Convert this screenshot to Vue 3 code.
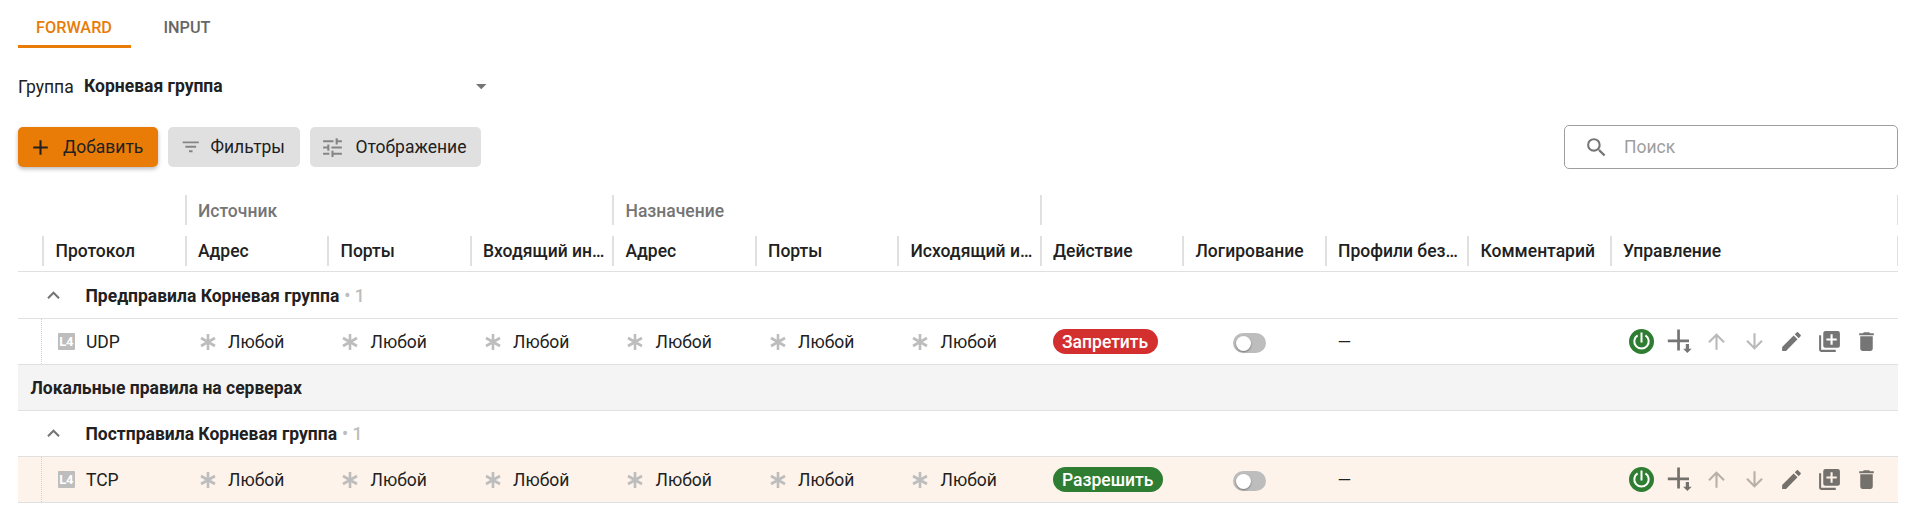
<script setup>
const columns = ['Протокол', 'Адрес', 'Порты', 'Входящий ин…', 'Адрес', 'Порты', 'Исходящий и…', 'Действие', 'Логирование', 'Профили без…', 'Комментарий', 'Управление']
const sections = [
  { id: 'pre', title: 'Предправила Корневая группа', protocol: 'UDP', action: 'Запретить', kind: 'deny' },
  { id: 'local', title: 'Локальные правила на серверах', banner: true },
  { id: 'post', title: 'Постправила Корневая группа', protocol: 'TCP', action: 'Разрешить', kind: 'allow', tinted: true },
]
const actions = [
  { name: 'up', faded: true, d: 'M13 20h-2V8l-5.500 5.500-1.420-1.420L12 4.160l7.920 7.920-1.420 1.420L13 8v12z' },
  { name: 'down', faded: true, d: 'M11 4h2v12l5.500-5.500 1.420 1.420L12 19.840l-7.920-7.920L5.500 10.500 11 16V4z' },
  { name: 'edit', d: 'M20.710 7.040c.39-.39.39-1.040 0-1.410l-2.340-2.340c-.37-.39-1.020-.39-1.410 0l-1.840 1.830 3.750 3.750M3 17.250V21h3.750L17.810 9.930l-3.750-3.750L3 17.250z' },
  { name: 'copy', d: 'M4 6H2v14a2 2 0 0 0 2 2h14v-2H4V6zm16-4H8a2 2 0 0 0-2 2v12a2 2 0 0 0 2 2h12a2 2 0 0 0 2-2V4a2 2 0 0 0-2-2zm-1 9h-4v4h-2v-4H9V9h4V5h2v4h4v2z' },
  { name: 'delete', d: 'M19 4h-3.500l-1-1h-5l-1 1H5v2h14M6 19a2 2 0 0 0 2 2h8a2 2 0 0 0 2-2V7H6v12z' },
]
</script>

<template>
  <main class="page">
    <nav class="tabs">
      <a class="tab active">FORWARD</a>
      <a class="tab">INPUT</a>
    </nav>

    <div class="group">
      <span class="group-label">Группа</span>
      <div class="select">
        <span class="select-value">Корневая группа</span>
        <svg class="caret" viewBox="0 0 10 5"><path d="M0 0h10L5 5z" /></svg>
      </div>
    </div>

    <div class="toolbar">
      <button class="btn primary">
        <svg class="btn-icon" viewBox="0 0 24 24"><path d="M19 13h-6v6h-2v-6H5v-2h6V5h2v6h6v2z" /></svg>
        <span>Добавить</span>
      </button>
      <button class="btn filters">
        <svg class="btn-icon" viewBox="0 0 24 24"><path d="M6 13h12v-2H6M3 6v2h18V6M10 18h4v-2h-4v2z" /></svg>
        <span>Фильтры</span>
      </button>
      <button class="btn display">
        <svg class="btn-icon" viewBox="0 0 24 24"><path d="M3 17v2h6v-2H3M3 5v2h10V5H3m10 16v-2h8v-2h-8v-2h-2v6h2M7 9v2H3v2h4v2h2V9H7m14 4v-2H11v2h10m-6-4h2V7h4V5h-4V3h-2v6z" /></svg>
        <span>Отображение</span>
      </button>
      <div class="search">
        <svg class="search-icon" viewBox="0 0 24 24"><path d="M9.500 3A6.500 6.500 0 0 1 16 9.500c0 1.610-.59 3.090-1.560 4.230l.27.27h.79l5 5-1.500 1.500-5-5v-.79l-.27-.27A6.516 6.516 0 0 1 9.500 16a6.500 6.500 0 0 1 0-13m0 2C7 5 5 7 5 9.500S7 14 9.500 14 14 12 14 9.500 12 5 9.500 5z" /></svg>
        <span>Поиск</span>
      </div>
    </div>

    <section class="table">
      <div class="grid band">
        <div class="band-lead"></div>
        <div class="band-cell">Источник</div>
        <div class="band-cell">Назначение</div>
        <div class="band-cell band-rest"></div>
      </div>
      <div class="grid head">
        <div></div>
        <div v-for="(c, i) in columns" :key="i" class="head-cell"><span>{{ c }}</span></div>
      </div>

      <template v-for="s in sections" :key="s.id">
        <div v-if="s.banner" class="banner">{{ s.title }}</div>
        <template v-else>
          <div class="section" :class="s.id">
            <svg class="chevron" viewBox="0 0 24 24"><path d="M7.410 15.410L12 10.830l4.590 4.580L18 14l-6-6-6 6z" /></svg>
            <span class="section-title">{{ s.title }}</span>
            <span class="section-count">• 1</span>
          </div>
          <div class="grid row" :class="{ tinted: s.tinted }">
            <div></div>
            <div class="cell protocol">
              <span class="layer">L4</span>
              <span class="text">{{ s.protocol }}</span>
            </div>
            <div v-for="n in 6" :key="n" class="cell any">
              <svg class="star" viewBox="0 0 16 16"><path d="M8 0v16M1 4l14 8M15 4L1 12" /></svg>
              <span class="text">Любой</span>
            </div>
            <div class="cell"><span class="chip" :class="s.kind">{{ s.action }}</span></div>
            <div class="cell logging"><span class="toggle"><i></i></span></div>
            <div class="cell"><span class="text">—</span></div>
            <div class="cell"></div>
            <div class="cell actions">
              <svg class="icon power" viewBox="0 0 25 25">
                <circle cx="12.500" cy="12.500" r="12.500" />
                <path d="M12.500 3.500v10M8.600 6.300a7.200 7.200 0 1 0 7.800 0" />
              </svg>
              <svg class="icon insert" viewBox="0 0 25 25">
                <path d="M.8 10.500h21.200v2.700H.8zM10.200 .6h2.700v21h-2.700zM18.800 15h3.200v4.700h2.700l-4.300 4.300-4.300-4.300h2.700z" />
              </svg>
              <svg v-for="a in actions" :key="a.name" class="icon" :class="{ faded: a.faded }" viewBox="0 0 24 24"><path :d="a.d" /></svg>
            </div>
          </div>
        </template>
      </template>
    </section>
  </main>
</template>

<style>
body { background: #fff; }
</style>

<style scoped>
* { box-sizing: border-box; }
.page {
  height: 521px;
  padding: 0 10px 0 18px;
  overflow: hidden;
  font-family: Roboto, "Noto Sans", sans-serif;
  font-size: 17.5px;
  line-height: 25px;
  color: #212121;
}
svg { display: block; flex: none; fill: currentColor; }

.tabs { display: flex; height: 48px; }
.tab {
  width: 113px;
  height: 48px;
  padding: 15px 1px 0 0;
  font-size: 16.25px;
  font-weight: 500;
  text-align: center;
  color: #666;
}
.tab.active { color: #e87c07; border-bottom: 3px solid #e87c07; }

.group { display: flex; height: 77px; padding-top: 26px; }
.group-label { width: 66px; padding-top: 1px; }
.select { display: flex; width: 402.500px; height: 25px; justify-content: space-between; font-weight: 700; }
.caret { width: 10.500px; height: 5.250px; margin-top: 10px; color: #757575; }

.toolbar { display: flex; align-items: center; height: 44px; gap: 10px; }
.btn {
  display: flex;
  align-items: center;
  height: 40px;
  padding: 0;
  border: 0;
  border-radius: 5px;
  background: #e0e0e0;
  color: #212121;
  font: inherit;
}
.btn-icon { width: 25px; height: 25px; color: #858585; }
.primary { width: 140px; padding-left: 10px; gap: 10px; background: #e87c07; box-shadow: 0 2px 4px rgba(0, 0, 0, .28); }
.primary .btn-icon { color: #212121; }
.filters { width: 132px; padding-left: 12px; gap: 9px; }
.filters .btn-icon { width: 21.500px; height: 21.500px; }
.display { width: 171px; padding-left: 10px; gap: 10.500px; }
.search {
  display: flex;
  align-items: center;
  width: 334px;
  height: 44px;
  margin-left: auto;
  padding-left: 19px;
  gap: 15px;
  border: 1px solid #9e9e9e;
  border-radius: 5px;
  color: #9e9e9e;
}
.search-icon { width: 25px; height: 25px; color: #757575; }

.table { padding-top: 26px; font-size: 17.5px; }
.grid { display: grid; grid-template-columns: 24px repeat(11, 142.500px) 1fr; }
.band { height: 30px; margin-bottom: 11px; font-weight: 500; color: #757575; }
.band-lead { grid-column: span 2; }
.band-cell { grid-column: span 3; padding: 4px 0 0 11.500px; border-left: 2px solid #e0e0e0; }
.band-rest { grid-column: span 5; border-right: 1px solid #e0e0e0; }
.head { height: 36px; border-bottom: 1px solid #e0e0e0; font-weight: 500; }
.head-cell { height: 30px; padding: 3px 0 0 11.500px; border-left: 2px solid #e0e0e0; }
.head-cell span { display: block; white-space: nowrap; }
.head-cell:last-child { border-right: 1px solid #e0e0e0; }

.section { display: flex; align-items: center; height: 46px; border-bottom: 1px solid #e0e0e0; padding-left: 23px; }
.section.pre { height: 47px; }
.chevron { width: 25px; height: 25px; margin-right: 19.500px; color: #757575; }
.section-title { padding-top: 2px; font-weight: 700; }
.section-count { margin-left: 5px; padding-top: 2px; font-weight: 500; color: #bdbdbd; }
.banner {
  height: 46px;
  padding: 11px 12.500px;
  border-bottom: 1px solid #e0e0e0;
  background: #f4f4f4;
  font-weight: 700;
}
.row { height: 46px; border-bottom: 1px solid #e0e0e0; }
.tinted { background: #fdf3ea; }
.cell { display: flex; align-items: center; padding-left: 13px; }
.text { padding-top: 1px; }
.protocol { margin-left: -1px; padding-left: 15.500px; gap: 11px; border-left: 1px dotted #d0d0d0; }
.layer {
  width: 17.500px;
  height: 17.500px;
  border-radius: 1px;
  background: #bdbdbd;
  color: #fff;
  font-size: 13px;
  font-weight: 700;
  line-height: 17.500px;
  letter-spacing: -.3px;
  text-align: center;
}
.any { padding-left: 15px; gap: 12.500px; }
.star { width: 16px; height: 16px; fill: none; stroke: #bdbdbd; stroke-width: 2.600; }
.chip { height: 25px; padding: 0 9.500px; border-radius: 13px; color: #fff; font-weight: 500; line-height: 26px; }
.deny { background: #d32f2f; }
.allow { background: #2e7d32; }
.logging { padding: 3px 0 0 51px; }
.toggle { width: 33px; height: 20px; padding: 2.500px; border-radius: 10px; background: #bdbdbd; }
.toggle i { display: block; width: 15px; height: 15px; border-radius: 50%; background: #fff; box-shadow: 0 1px 2px rgba(0, 0, 0, .4); }
.actions { gap: 12.500px; padding-left: 19.500px; color: rgba(0, 0, 0, .54); }
.icon { width: 25px; height: 25px; }
.faded { opacity: .5; }
.power circle { fill: #2e7d32; }
.power path { fill: none; stroke: #fff; stroke-width: 2; }
</style>
